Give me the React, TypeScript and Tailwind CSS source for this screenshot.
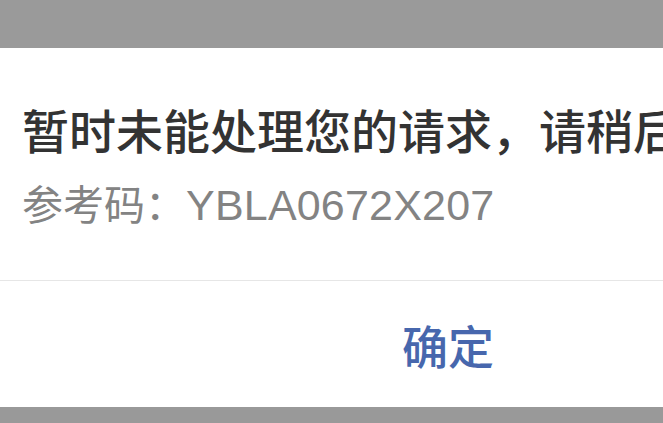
export default function App() {
  return (
    <div className="w-[663px] h-[423px] overflow-hidden bg-[#999999] font-['Noto_Sans_CJK_SC',sans-serif]">
      <div className="w-[896px] flex flex-col">
        {/* Dimmed backdrop above the dialog */}
        <div className="h-[48px] bg-[#9a9a9a]" />
        {/* Dialog */}
        <div className="bg-white">
          <div className="pl-[22px] pt-[57px] pb-[57px] border-b border-[#e6e6e6]">
            <p className="text-[47px] leading-[47px] font-medium text-[#333333] whitespace-nowrap">
              暂时未能处理您的请求，请稍后重试
            </p>
            <p className="mt-[30px] h-[41px] text-[41px] leading-[41px] text-[#838383] whitespace-nowrap">
              参考码：
              <span className="font-['Liberation_Sans','Noto_Sans_CJK_SC',sans-serif] text-[43px] leading-[41px] tracking-[0.2px]">
                YBLA0672X207
              </span>
            </p>
          </div>
          <button className="w-full h-[126px] flex items-center justify-center text-[46px] leading-none font-medium text-[#4767ad]">
            确定
          </button>
        </div>
        <div className="h-[17px] bg-[#999999]" />
      </div>
    </div>
  );
}
